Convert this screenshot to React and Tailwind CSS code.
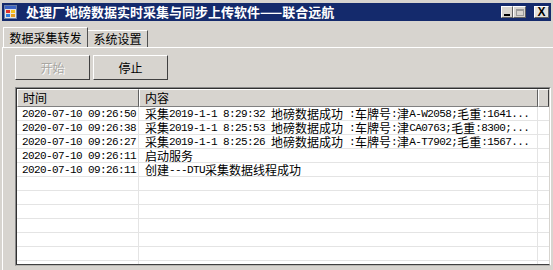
import React from "react";

const rows = [
  ["2020-07-10 09:26:50", "采集2019-1-1 8:29:32 地磅数据成功 :车牌号:津A-W2058;毛重:1641..."],
  ["2020-07-10 09:26:38", "采集2019-1-1 8:25:53 地磅数据成功 :车牌号:津CA0763;毛重:8300;..."],
  ["2020-07-10 09:26:27", "采集2019-1-1 8:25:26 地磅数据成功 :车牌号:津A-T7902;毛重:1567..."],
  ["2020-07-10 09:26:11", "启动服务"],
  ["2020-07-10 09:26:11", "创建---DTU采集数据线程成功"],
  ["", ""],
  ["", ""],
  ["", ""],
  ["", ""],
  ["", ""],
  ["", ""],
  ["", ""],
];

function Mixed({ s }) {
  const parts = s.split(/([\u0000-\u00ff]+)/).filter((p) => p.length);
  return (
    <>
      {parts.map((p, i) =>
        /^[\u0000-\u00ff]+$/.test(p) ? (
          <span key={i} className="font-['Liberation_Mono',monospace] text-[11px] leading-[12px] tracking-[-0.6px] whitespace-pre">
            {p}
          </span>
        ) : (
          <span key={i} className="text-[12px] leading-[12px]">{p}</span>
        )
      )}
    </>
  );
}

function AppIcon() {
  return (
    <svg width="13" height="14" viewBox="0 0 13 14">
      <rect x="0.5" y="0.5" width="12" height="13" fill="#e8e4dc" stroke="#6b7fa8" />
      <rect x="1" y="1" width="11" height="3" fill="#3b63c4" />
      <rect x="2" y="5" width="4" height="3" fill="#e0302a" />
      <rect x="7" y="5" width="4" height="3" fill="#f3c21c" />
      <rect x="2" y="9" width="4" height="3" fill="#2f7de0" />
      <rect x="7" y="9" width="4" height="3" fill="#e8a020" />
    </svg>
  );
}

export default function App() {
  return (
    <div className="w-[553px] h-[270px] bg-[#d7d4cf] overflow-hidden flex flex-col font-['Noto_Sans_CJK_SC',sans-serif] text-black">
      {/* title bar */}
      <div className="mt-[3px] mx-[2px] h-[18px] bg-[#142a6c] flex items-center">
        <div className="ml-[2px] flex">
          <AppIcon />
        </div>
        <div className="ml-[9px] text-white font-bold text-[13px] leading-[18px] whitespace-nowrap">
          处理厂地磅数据实时采集与同步上传软件——联合远航
        </div>
        <div className="flex-1" />
        <div className="flex items-center mr-[2px]">
          <div className="w-[12px] h-[12px] bg-[#d7d4cf] border-t border-l border-white border-r border-b border-r-[#606060] border-b-[#606060] flex items-end justify-center pb-[1px]">
            <div className="w-[6px] h-[2px] bg-black" />
          </div>
          <div className="w-[13px] h-[12px] bg-[#d7d4cf] border-t border-l border-white border-r border-b border-r-[#606060] border-b-[#606060] flex items-center justify-center">
            <div className="w-[8px] h-[7px] border border-[#9a9a9a] border-t-2" />
          </div>
          <div className="ml-[8px] w-[15px] h-[12px] bg-[#e4e2de] border-t border-l border-white border-r border-b border-r-[#606060] border-b-[#606060] flex items-center justify-center text-[12px] font-bold leading-none font-['Liberation_Sans',sans-serif]">
            X
          </div>
        </div>
      </div>

      {/* tabs */}
      <div className="mt-[6px] h-[20px] flex items-end pl-[3px]">
        <div className="h-[20px] w-[85px] border-t border-l border-white border-r border-r-[#505050] bg-[#d7d4cf] flex items-center justify-center text-[12px] leading-none">
          数据采集转发
        </div>
        <div className="h-[17px] w-[60px] border-t border-white border-r border-r-[#505050] flex items-center justify-center text-[12px] leading-none">
          系统设置
        </div>
      </div>
      <div className="flex-1 border-t border-l border-white ml-[2px] flex flex-col pl-[12px]">
        {/* buttons */}
        <div className="mt-[7px] flex gap-[3px]">
          <div className="w-[75px] h-[25px] border border-t-white border-l-white border-r-[#404040] border-b-[#404040] flex items-center justify-center text-[12px] text-[#a8a6a2] [text-shadow:1px_1px_0_#ffffff]">
            开始
          </div>
          <div className="w-[75px] h-[25px] border border-t-white border-l-white border-r-[#404040] border-b-[#404040] flex items-center justify-center text-[12px]">
            停止
          </div>
        </div>

        {/* list view */}
        <div className="mt-[7px] w-[536px] h-[179px] border border-t-[#8a8a8a] border-l-[#8a8a8a] border-r-white border-b-[#b8b6b2]">
          <div className="w-full h-full border border-t-[#303030] border-l-[#303030] border-r-[#d7d4cf] border-b-[#404040] bg-white overflow-hidden flex flex-col">
            <div className="grid grid-cols-[122px_399px_1fr] h-[18px] shrink-0 bg-[#d7d4cf]">
              <div className="border-t border-l border-white border-r border-b border-r-[#606060] border-b-[#808080] text-[12px] leading-[15px] pl-[5px]">
                时间
              </div>
              <div className="border-t border-l border-white border-r border-b border-r-[#606060] border-b-[#808080] text-[12px] leading-[15px] pl-[5px]">
                内容
              </div>
              <div className="border-t border-l border-white border-r border-b border-r-[#404040] border-b-[#808080]" />
            </div>
            {rows.map((r, i) => (
              <div key={i} className="grid grid-cols-[122px_399px_1fr] h-[14px] shrink-0 border-b border-[#e4e4e4]">
                <div className="border-r border-[#e4e4e4] pl-[5px] flex items-center whitespace-nowrap overflow-hidden">
                  <Mixed s={r[0]} />
                </div>
                <div className="border-r border-[#e4e4e4] pl-[6px] flex items-center whitespace-nowrap overflow-hidden">
                  <Mixed s={r[1]} />
                </div>
                <div />
              </div>
            ))}
          </div>
        </div>
      </div>
    </div>
  );
}
